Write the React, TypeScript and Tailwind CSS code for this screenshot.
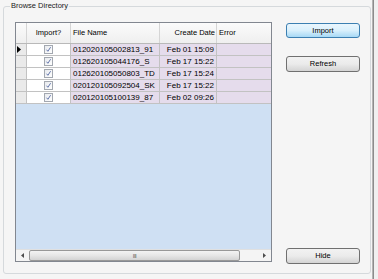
import React from "react";

const rows = [
  { name: "012020105002813_91", date: "Feb 01 15:09" },
  { name: "012620105044176_S", date: "Feb 17 15:22" },
  { name: "012620105050803_TD", date: "Feb 17 15:24" },
  { name: "020120105092504_SK", date: "Feb 17 15:22" },
  { name: "020120105100139_87", date: "Feb 02 09:26" },
];

function Check() {
  return (
    <div className="w-[9px] h-[9px] border border-[#a3a8b0] bg-gradient-to-br from-[#e8eaee] to-[#ffffff] flex items-center justify-center">
      <svg width="7" height="7" viewBox="0 0 7 7">
        <path d="M1.5 3.7 L2.9 5.3 L5.6 1.2" stroke="#5468a3" strokeWidth="0.9" fill="none" />
      </svg>
    </div>
  );
}

function Btn({ label, primary }: { label: string; primary?: boolean }) {
  return (
    <div
      className={
        "w-[74px] flex items-center justify-center rounded-[3px] border text-[7.5px] text-black " +
        (primary
          ? "h-[15px] border-[#3c7fb1] bg-gradient-to-b from-[#eaf6fd] via-[#d9f0fc] to-[#a7d9f5]"
          : "h-[16px] border-[#707070] bg-gradient-to-b from-[#f2f2f2] via-[#ebebeb] to-[#d4d4d4]")
      }
    >
      {label}
    </div>
  );
}

export default function App() {
  return (
    <div
      className="w-[378px] h-[279px] bg-[#f5f5f5] flex text-black overflow-hidden"
      style={{ fontFamily: '"Liberation Sans", Arial, sans-serif' }}
    >
      <div className="w-[372px] pl-[3px]">
        <fieldset className="w-[368px] border border-[#d5d9dc] rounded-[3px] pb-[9px] px-0">
          <legend className="ml-[6px] px-[1px] text-[7.5px] leading-[12px] text-[#1a1a1a]">Browse Directory</legend>
          <div className="flex pt-[10px] pl-[11px]">
            {/* grid */}
            <div className="w-[257px] h-[240px] border border-[#828790] flex flex-col bg-[#cfe0f3]">
              {/* header */}
              <div className="flex h-[21px] bg-gradient-to-b from-[#fbfbfb] to-[#efefef] border-b border-[#b9b9b9] text-[7.5px]">
                <div className="w-[11px] border-r border-[#d5d5d5]" />
                <div className="w-[44px] border-r border-[#d5d5d5] flex items-center justify-center">Import?</div>
                <div className="w-[89px] border-r border-[#d5d5d5] flex items-center pl-[2px]">File Name</div>
                <div className="w-[57px] border-r border-[#d5d5d5] flex items-center justify-end pr-[1px]">Create Date</div>
                <div className="flex-1 flex items-center pl-[2px]">Error</div>
              </div>
              {rows.map((r, i) => (
                <div key={i} className="flex h-[12px] text-[8px] leading-[11px]">
                  <div className="w-[11px] bg-[#eaeaea] border-r border-b border-[#c2c2c2] flex items-center pl-[1px]">
                    {i === 0 && (
                      <svg width="4" height="7" viewBox="0 0 4 7">
                        <path d="M0 0 L4 3.5 L0 7 Z" fill="#000" />
                      </svg>
                    )}
                  </div>
                  <div className="w-[44px] bg-white border-r border-b border-[#c2c2c2] flex items-center justify-center">
                    <Check />
                  </div>
                  <div className="w-[89px] bg-[#e5dcec] border-r border-b border-[#c2c2c2] pl-[2px] flex items-center">{r.name}</div>
                  <div className="w-[57px] bg-[#e5dcec] border-r border-b border-[#c2c2c2] flex items-center justify-end pr-[2px]">{r.date}</div>
                  <div className="flex-1 bg-[#e5dcec] border-b border-[#c2c2c2]" />
                </div>
              ))}
              <div className="flex-1" />
              {/* scrollbar */}
              <div className="flex h-[12px] bg-[#eeeeee] border-t border-[#e0e0e0]">
                <div className="w-[13px] flex items-center justify-center bg-[#f4f4f4]">
                  <svg width="3" height="5" viewBox="0 0 3 5">
                    <path d="M3 0 L0 2.5 L3 5 Z" fill="#4d4d4d" />
                  </svg>
                </div>
                <div className="w-[211px] rounded-[2px] border border-[#989898] bg-gradient-to-b from-[#f3f3f3] via-[#e6e6e6] to-[#d3d3d3] flex items-center justify-center">
                  <span className="text-[6px] leading-none text-[#606060] tracking-[-0.5px]">III</span>
                </div>
                <div className="flex-1 bg-[#f4f4f4]" />
                <div className="w-[13px] flex items-center justify-center bg-[#f4f4f4]">
                  <svg width="3" height="5" viewBox="0 0 3 5">
                    <path d="M0 0 L3 2.5 L0 5 Z" fill="#4d4d4d" />
                  </svg>
                </div>
              </div>
            </div>
            {/* buttons */}
            <div className="ml-[14px] h-[242px] flex flex-col pt-[1px]">
              <Btn label="Import" primary />
              <div className="mt-[18px]">
                <Btn label="Refresh" />
              </div>
              <div className="mt-auto">
                <Btn label="Hide" />
              </div>
            </div>
          </div>
        </fieldset>
      </div>
      <div className="w-[1px] bg-[#b4b4b4]" />
      <div className="w-[1px] bg-[#8c8c8c]" />
      <div className="flex-1 bg-[#f0f0f0]" />
    </div>
  );
}
